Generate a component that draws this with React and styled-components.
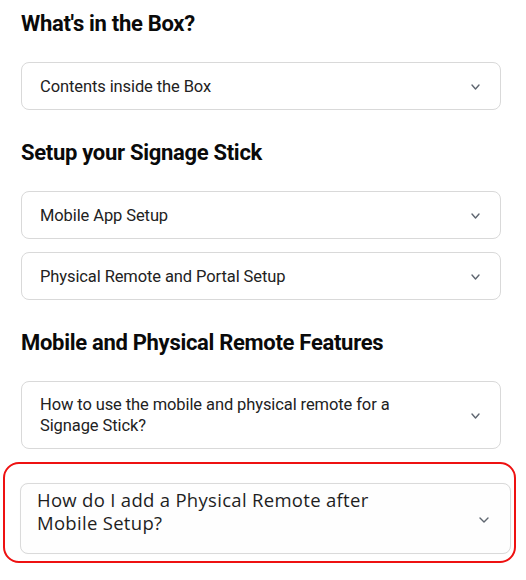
import React from "react";
import styled, { createGlobalStyle } from "styled-components";

const Global = createGlobalStyle`
  html, body { margin: 0; padding: 0; background: #ffffff; }
  body { font-family: Roboto, "Liberation Sans", sans-serif; color: #1b1b1b; }
  * { box-sizing: border-box; }
`;

const Page = styled.div`
  width: 526px;
  padding: 11px 25px 0 21px;
  display: flex;
  flex-direction: column;
`;

const Section = styled.section`
  display: flex;
  flex-direction: column;
  gap: 13px;
  margin-bottom: 30px;
`;

const Heading = styled.h2`
  margin: 0 0 25px 0;
  font-family: Roboto, "Liberation Sans", sans-serif;
  font-weight: 700;
  font-size: 22px;
  line-height: 26px;
  letter-spacing: -0.3px;
  color: #0a0a0a;
`;

const Card = styled.div`
  display: flex;
  align-items: center;
  justify-content: space-between;
  min-height: 48px;
  padding: 12px 20px 12px 18px;
  border: 1px solid #d9d9d9;
  border-radius: 8px;
  background: #ffffff;
`;

const CardText = styled.span`
  font-family: Roboto, "Liberation Sans", sans-serif;
  font-size: 16.5px;
  line-height: 21px;
  color: #222222;
  letter-spacing: -0.1px;
  max-width: 385px;
`;

const Highlight = styled.div`
  margin: -17px -15px 0 -18px;
  padding: 19px 3px 7px 15px;
  border: 2px solid #ee1111;
  border-radius: 16px;
`;

const BigCard = styled.div`
  display: flex;
  align-items: center;
  justify-content: space-between;
  height: 71px;
  padding: 0 21px 0 16px;
  border: 1px solid #dadada;
  border-radius: 8px;
  background: #fefefe;
  box-shadow: 0 0 1px rgba(0,0,0,0.05);
`;

const BigText = styled.span`
  align-self: flex-start;
  margin-top: 4px;
  font-family: "Open Sans", "Noto Sans", sans-serif;
  font-size: 18.5px;
  line-height: 23px;
  letter-spacing: 0.3px;
  color: #1e1e1e;
  max-width: 380px;
`;

const Chevron = ({ w = 9, h = 5, offset = 2 }) => (
  <svg width={w} height={h + 2} viewBox={`0 0 ${w} ${h + 2}`} style={{ flexShrink: 0, marginTop: offset }}>
    <polyline
      points={`1,1 ${w / 2},${h} ${w - 1},1`}
      fill="none"
      stroke="#5f6670"
      strokeWidth="1.4"
      strokeLinecap="round"
      strokeLinejoin="round"
    />
  </svg>
);

const Item = ({ children }) => (
  <Card>
    <CardText>{children}</CardText>
    <Chevron />
  </Card>
);

export default function App() {
  return (
    <>
      <Global />
      <Page>
        <Heading>What's in the Box?</Heading>
        <Section>
          <Item>Contents inside the Box</Item>
        </Section>
        <Heading>Setup your Signage Stick</Heading>
        <Section>
          <Item>Mobile App Setup</Item>
          <Item>Physical Remote and Portal Setup</Item>
        </Section>
        <Heading>Mobile and Physical Remote Features</Heading>
        <Section>
          <Item>How to use the mobile and physical remote for a Signage Stick?</Item>
        </Section>
        <Highlight>
          <BigCard>
            <BigText>How do I add a Physical Remote after Mobile Setup?</BigText>
            <Chevron w={10} h={5} offset={4} />
          </BigCard>
        </Highlight>
      </Page>
    </>
  );
}
